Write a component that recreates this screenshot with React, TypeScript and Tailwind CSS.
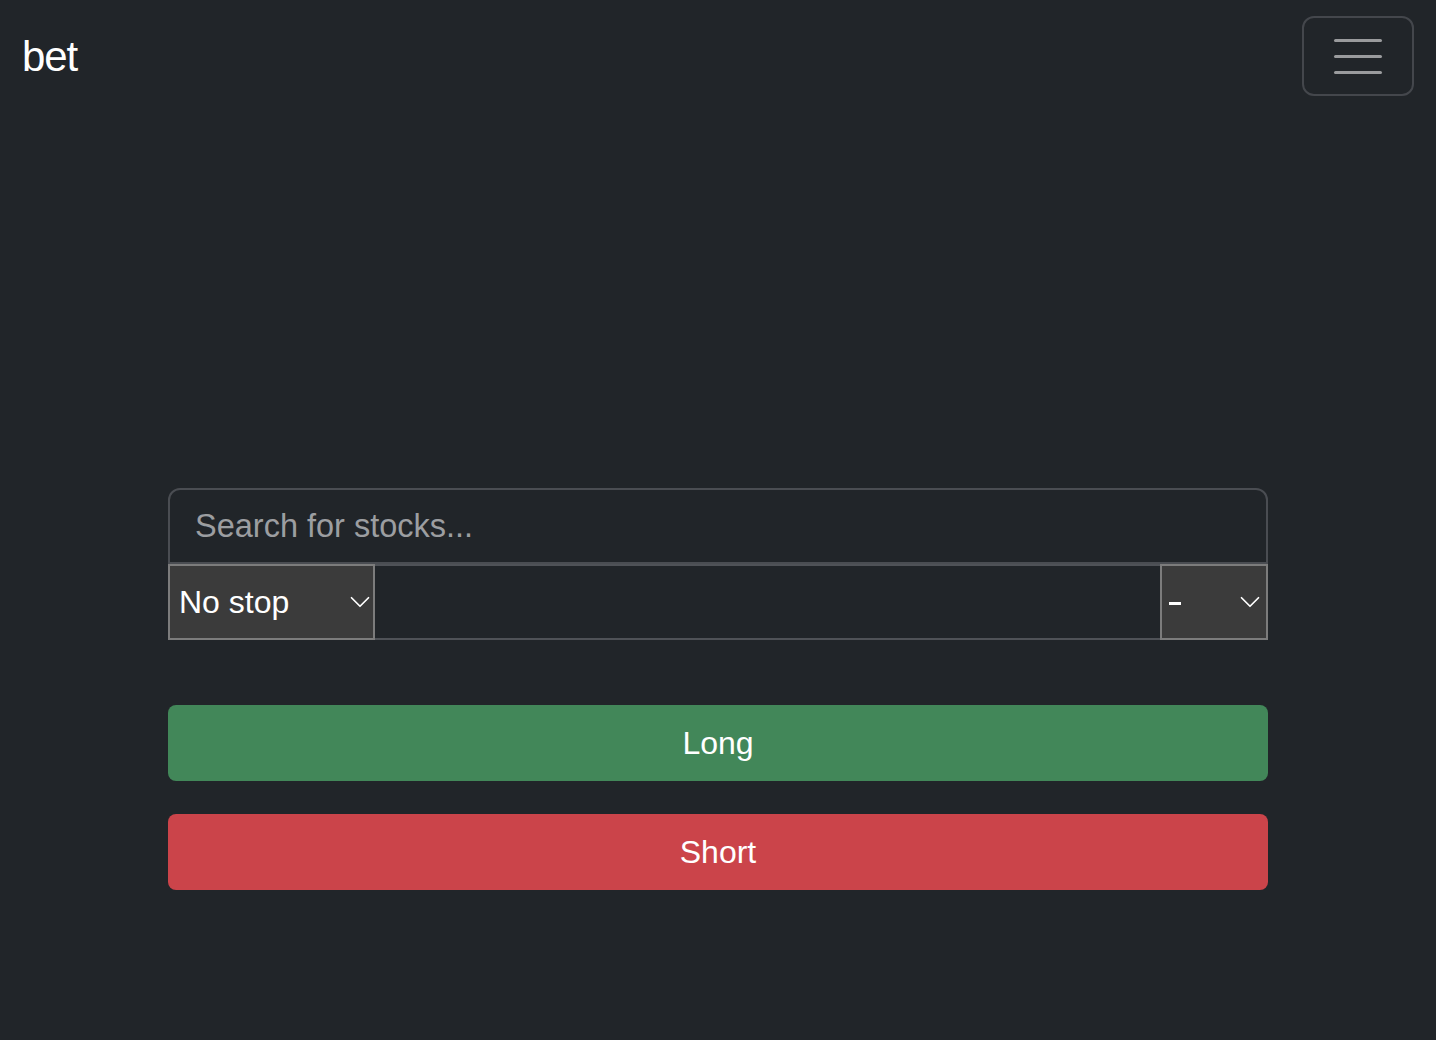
import { ChevronDown } from "lucide-react";

const App = () => {
  return (
    <div
      className="min-h-screen w-full bg-[#212529] text-white"
      style={{ fontFamily: '"Liberation Sans", Arial, sans-serif' }}
    >
      {/* NAV */}
      <nav className="flex items-center justify-between pl-[22px] pr-[22px] pt-[16px]">
        <span className="text-[42px] leading-none tracking-tight mt-[2px]">bet</span>
        <button className="w-[112px] h-[80px] rounded-[12px] border-2 border-[#44474c] flex flex-col items-center justify-center gap-[13px]">
          <span className="block w-[48px] h-[3px] rounded-full bg-[#9a9b9d]" />
          <span className="block w-[48px] h-[3px] rounded-full bg-[#9a9b9d]" />
          <span className="block w-[48px] h-[3px] rounded-full bg-[#9a9b9d]" />
        </button>
      </nav>

      {/* FORM */}
      <main className="w-[1100px] mx-auto mt-[392px]">
        <div className="h-[76px] rounded-t-[12px] border-2 border-[#4a4d52] flex items-center px-[25px]">
          <span className="text-[32.5px] text-[#9c9ea1]">Search for stocks...</span>
        </div>
        <div className="flex h-[76px]">
          <div className="w-[207px] bg-[#3b3b3b] border-2 border-[#7c7c7c] flex items-center justify-between pl-[9px]">
            <span className="text-[32px]">No stop</span>
            <ChevronDown size={34} strokeWidth={1.2} className="mr-[-4px]" />
          </div>
          <div className="flex-1 border-y-2 border-[#4f5257]" />
          <div className="w-[108px] bg-[#3b3b3b] border-2 border-[#7c7c7c] flex items-center justify-between pl-[7px]">
            <span className="block w-[12px] h-[3px] bg-white mt-[3px]" />
            <ChevronDown size={34} strokeWidth={1.2} className="mr-[-1px]" />
          </div>
        </div>

        <button className="mt-[65px] w-full h-[76px] rounded-[8px] bg-[#428759] text-[32px] flex items-center justify-center">
          Long
        </button>
        <button className="mt-[33px] w-full h-[76px] rounded-[8px] bg-[#cb444a] text-[32px] flex items-center justify-center">
          Short
        </button>
      </main>
    </div>
  );
};

export default App;
